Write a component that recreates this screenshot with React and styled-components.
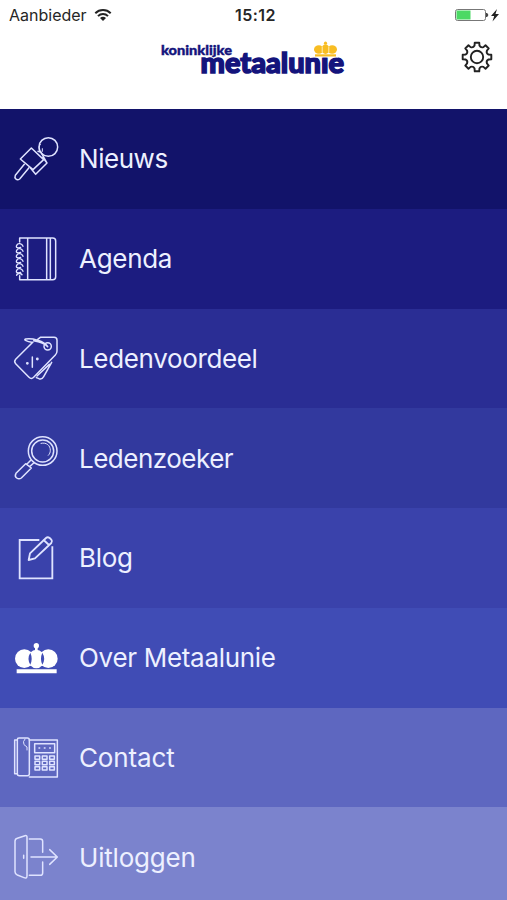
import React from 'react';
import styled, { createGlobalStyle } from 'styled-components';

const GlobalStyle = createGlobalStyle`
    *, *::before, *::after {
        box-sizing: border-box;
    }
    body {
        margin: 0;
        background: #fff;
        font-family: Inter, "Liberation Sans", sans-serif;
    }
`

const StyledScreen = styled.div`
    display: flex;
    flex-direction: column;
    width: 507px;
    height: 900px;
    overflow: hidden;
    background: #fff;
`

const StyledStatusBar = styled.div`
    flex: none;
    display: grid;
    grid-template-columns: 1fr auto 1fr;
    align-items: center;
    height: 30px;
    padding: 0 7px 0 9px;
    color: #262626;
`

const StyledCarrier = styled.div`
    display: flex;
    align-items: center;
    gap: 7px;
    font-size: 16px;
`

const StyledTime = styled.div`
    font-size: 16px;
    font-weight: 600;
    letter-spacing: 0.5px;
    padding-left: 2px;
`

const StyledBattery = styled.div`
    display: flex;
    justify-content: flex-end;
    align-items: center;
`

const StyledHeader = styled.header`
    flex: none;
    display: flex;
    align-items: flex-start;
    justify-content: space-between;
    height: 79px;
    padding: 8px 14px 0 157px;
`

const StyledLogo = styled.svg`
    display: block;
    width: 192px;
    height: 44px;
    overflow: visible;
    font-family: Lato, "Open Sans", sans-serif;
    font-weight: 900;
    fill: #14147c;
    stroke: #14147c;
`

const StyledSettings = styled.button`
    padding: 3px 0 0;
    border: 0;
    background: none;
    line-height: 0;
    cursor: pointer;
`

const StyledMenu = styled.nav`
    flex: none;
    display: flex;
    flex-direction: column;
`

const StyledMenuItem = styled.a`
    display: flex;
    align-items: center;
    gap: 19px;
    height: 99.75px;
    padding-left: 12px;
    background: ${({ $color }) => $color};
    color: #edf0ff;
    cursor: pointer;
`

const StyledIcon = styled.svg`
    flex: none;
    width: 48px;
    height: 48px;
    fill: none;
    stroke: #dfe3ff;
    stroke-width: 4.5;
    stroke-linecap: round;
    stroke-linejoin: round;
`

const StyledLabel = styled.span`
    padding-top: 1px;
    font-size: 26px;
    font-weight: 400;
    line-height: 32px;
    letter-spacing: ${({ $spacing }) => $spacing}px;
    white-space: nowrap;
`

const NewsIcon = () => (
    <StyledIcon viewBox="36 29 144 144">
        <circle cx="145" cy="65" r="28" />
        <path d="M118 75c-2-7-1-12 3-18M127 70v8" strokeWidth="3" />
        <path d="M94 68l37 35-32 30-38-32z" />
        <path d="M114 78l9 3 18 32-34 34-15-18M128 96l13 17" />
        <path d="M73 117l-27 33c-4 9 4 17 13 11l28-34" />
    </StyledIcon>
)

const AgendaIcon = () => (
    <StyledIcon viewBox="36 29 144 144">
        <path d="M59 50V38h99q9 0 9 9v107q0 9-9 9H59v-12M83 38v125M140 38v125M151 38v125" />
        {[57, 72, 87, 102, 117, 132].map((y) => (
            <path key={y} d={`M69 ${y + 6}c-3-9-15-11-19-3s6 9 12 6`} strokeWidth="4" />
        ))}
        <path d="M66 148c-5-6-16-4-16 2" />
    </StyledIcon>
)

const BenefitsIcon = () => (
    <StyledIcon viewBox="36 28 144 144">
        <path d="M113 44l8-6h41q9 0 9 9v32q0 7-5 12l-65 67q-7 7-14 0l-40-41q-6-6 0-13l52-52" />
        <path d="M109 159l8 3q9 3 14-6l24-43M111 154l37-35" />
        <circle cx="143" cy="65" r="11" />
        <path d="M143 66c-10-18-48-26-66-23-8 2 5 8 18 10M101 48c20 3 34 9 42 18" />
        <path d="M97 97v31" />
        <circle cx="82" cy="116" r="2" />
        <circle cx="112" cy="103" r="2" />
    </StyledIcon>
)

const SearchIcon = () => (
    <StyledIcon viewBox="36 27 144 144">
        <circle cx="128" cy="78" r="43" />
        <circle cx="128" cy="78" r="33" />
        <path d="M123 55c17-4 28 7 28 21 0 6-2 11-6 15" strokeWidth="3" />
        <path d="M93 105l-12 12M101 114l-12 11M77 116l17 13-30 30q-7 5-14 0t-2-14z" />
    </StyledIcon>
)

const BlogIcon = () => (
    <StyledIcon viewBox="36 27 144 144">
        <path d="M118 45H59v115h98V64" strokeWidth="5.5" strokeLinecap="butt" strokeLinejoin="miter" />
        <path d="M86 105l4-20 48-46q5-5 11 0l5 5q4 5 0 10l-49 46zM131 45l16 15" strokeWidth="5.5" />
    </StyledIcon>
)

const CrownIcon = () => (
    <StyledIcon viewBox="36 26 144 144">
        <g fill="#fff" stroke="none">
            <circle cx="109" cy="61" r="8" />
            <path d="M105 66h8v10h-8z" />
            <ellipse cx="73" cy="100" rx="28" ry="28" />
            <ellipse cx="145" cy="100" rx="28" ry="28" />
            <ellipse cx="109" cy="101" rx="25" ry="28" />
            <path d="M50 132h120v12H50z" />
        </g>
        <path d="M91 82q-11 18 0 36q8-18 0-36zM127 82q-8 18 0 36q11-18 0-36z" fill="#404cb5" stroke="none" />
    </StyledIcon>
)

const PhoneIcon = () => (
    <StyledIcon viewBox="36 25 144 144">
        <path d="M52 46h-8v101h8M88 46h84v111H88" />
        <path d="M52 45q0-5 5-5h25q6 0 6 6v101q0 6-6 6H58q-6 0-6-6z" />
        <path d="M75 43q-8 8-3 17l9 7v9" strokeWidth="3" />
        <path d="M104 57h60v27h-60z" />
        <path d="M117 70h2M133 70h2M149 70h2" />
        {[94, 110, 126].map((y) => (
            <path key={y} d={`M105 ${y}h14v10h-14zM127 ${y}h14v10h-14zM149 ${y}h14v10h-14z`} />
        ))}
    </StyledIcon>
)

const LogoutIcon = () => (
    <StyledIcon viewBox="36 24 144 144">
        <path d="M75 32l-23 8q-7 2-7 9v91q0 7 7 10l20 8q9 4 9-5V37q0-7-6-5z" />
        <path d="M88 42h33q7 0 7 7v33M88 151h33q7 0 7-7v-33" />
        <path d="M93 96h78M149 74l23 22-23 22M71 91v9" />
    </StyledIcon>
)

const Logo = () => (
    <StyledLogo viewBox="157 38 192 44">
        <text x="161" y="54.5" fontSize="13.8" strokeWidth="0.4" textLength="71" lengthAdjust="spacingAndGlyphs">koninklijke</text>
        <text x="200.5" y="73.3" fontSize="28.5" strokeWidth="1.5" textLength="143.5" lengthAdjust="spacingAndGlyphs">metaalunie</text>
        <path d="M312 40h26v17.5h-26z" fill="#fff" stroke="none" />
        <g fill="#f8bd22" stroke="none">
            <circle cx="325.5" cy="43.2" r="1.6" />
            <ellipse cx="318.8" cy="49.5" rx="4.8" ry="4.2" />
            <ellipse cx="332.2" cy="49.5" rx="4.8" ry="4.2" />
            <ellipse cx="325.5" cy="49.3" rx="4.2" ry="4.7" />
            <path d="M315 54.3h21v2.2h-21z" />
        </g>
        <path d="M322.2 46.5v6M328.8 46.5v6" stroke="#fff2c5" strokeWidth="0.9" />
    </StyledLogo>
)

const WifiIcon = () => (
    <svg width="18" height="14" viewBox="0 0 18 14" fill="none" stroke="#222" strokeWidth="2">
        <path d="M1.3 5.2c4.3-4.2 11.1-4.2 15.4 0M4 8.1c2.8-2.8 7.2-2.8 10 0" />
        <path d="M9 13l-3-3q3-2.5 6 0z" fill="#222" stroke="none" />
    </svg>
)

const BatteryIcon = () => (
    <svg width="46" height="14" viewBox="0 0 46 14">
        <rect x="1.5" y="1.5" width="30" height="11" rx="2" fill="#fff" stroke="#777" />
        <path d="M2.5 2.5h14v9h-14z" fill="#4bd964" />
        <path d="M32.5 5q3 2 0 4z" fill="#444" stroke="#444" />
        <path d="M43 1l-6 7h3.2l-1.7 5.500 6.500-7.500h-3.500z" fill="#222" />
    </svg>
)

// Toothed outline, eight teeth around the hub
const gearPath = Array.from({ length: 8 }, (_, i) => {
    const point = (deg, r) => {
        const a = ((i * 45 + deg - 90) * Math.PI) / 180
        return `${(16 + r * Math.cos(a)).toFixed(2)} ${(16 + r * Math.sin(a)).toFixed(2)}`
    }
    return `${i ? 'L' : 'M'}${point(-9, 14.5)}L${point(9, 14.5)}L${point(12, 11.8)}Q${point(22.5, 9.7)} ${point(33, 11.8)}`
}).join('') + 'Z'

const GearIcon = () => (
    <svg width="32" height="32" viewBox="0 0 32 32" fill="none" stroke="#222" strokeWidth="1.9" strokeLinejoin="round">
        <path d={gearPath} />
        <circle cx="16" cy="16" r="6.2" />
    </svg>
)

const menuItems = [
    { label: 'Nieuws', color: '#12136a', spacing: -0.45, Icon: NewsIcon },
    { label: 'Agenda', color: '#1c1c80', spacing: -0.3, Icon: AgendaIcon },
    { label: 'Ledenvoordeel', color: '#2a2d94', spacing: -0.35, Icon: BenefitsIcon },
    { label: 'Ledenzoeker', color: '#32399e', spacing: -0.5, Icon: SearchIcon },
    { label: 'Blog', color: '#3a42ab', spacing: -0.3, Icon: BlogIcon },
    { label: 'Over Metaalunie', color: '#404cb5', spacing: -0.3, Icon: CrownIcon },
    { label: 'Contact', color: '#5e67c0', spacing: -0.15, Icon: PhoneIcon },
    { label: 'Uitloggen', color: '#7b83cd', spacing: -0.2, Icon: LogoutIcon },
]

const App = () => (
    <>
        <GlobalStyle />
        <StyledScreen>
            <StyledStatusBar>
                <StyledCarrier>
                    Aanbieder
                    <WifiIcon />
                </StyledCarrier>
                <StyledTime>15:12</StyledTime>
                <StyledBattery><BatteryIcon /></StyledBattery>
            </StyledStatusBar>
            <StyledHeader>
                <Logo />
                <StyledSettings aria-label="Instellingen"><GearIcon /></StyledSettings>
            </StyledHeader>
            <StyledMenu>
                {menuItems.map(({ label, color, spacing, Icon }) => (
                    <StyledMenuItem key={label} $color={color}>
                        <Icon />
                        <StyledLabel $spacing={spacing}>{label}</StyledLabel>
                    </StyledMenuItem>
                ))}
            </StyledMenu>
        </StyledScreen>
    </>
)

export default App
